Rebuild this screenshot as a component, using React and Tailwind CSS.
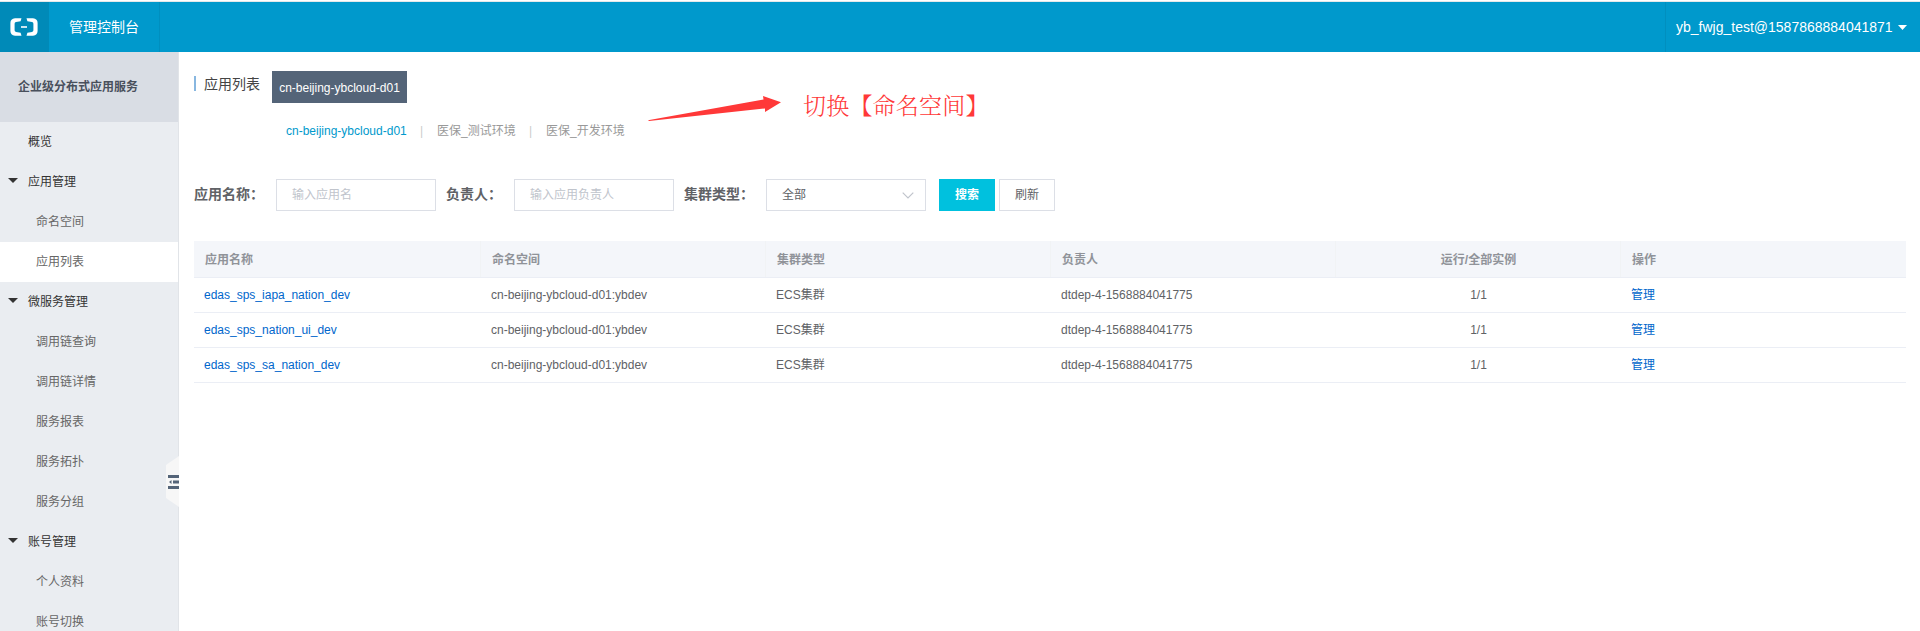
import React from "react";

const menu = [
  { label: "概览", kind: "top" },
  { label: "应用管理", kind: "group" },
  { label: "命名空间", kind: "sub" },
  { label: "应用列表", kind: "sub", active: true },
  { label: "微服务管理", kind: "group" },
  { label: "调用链查询", kind: "sub" },
  { label: "调用链详情", kind: "sub" },
  { label: "服务报表", kind: "sub" },
  { label: "服务拓扑", kind: "sub" },
  { label: "服务分组", kind: "sub" },
  { label: "账号管理", kind: "group" },
  { label: "个人资料", kind: "sub" },
  { label: "账号切换", kind: "sub" },
];

const columns = ["应用名称", "命名空间", "集群类型", "负责人", "运行/全部实例", "操作"];
const apps = ["edas_sps_iapa_nation_dev", "edas_sps_nation_ui_dev", "edas_sps_sa_nation_dev"];

function Logo() {
  return (
    <svg width="28" height="18" viewBox="0 0 28 18" fill="#fff">
      <path d="M11.5 .3H5Q.4 .8 .4 5V13Q.4 17.2 5 17.7H11.5L10.6 14.8L6 13.9Q4.6 13.5 4.6 12.3V5.7Q4.6 4.5 6 4.1L10.6 3.2Z" />
      <path d="M16.5 .3H23Q27.6 .8 27.6 5V13Q27.6 17.2 23 17.7H16.5L17.4 14.8L22 13.9Q23.4 13.5 23.4 12.3V5.7Q23.4 4.5 22 4.1L17.4 3.2Z" />
      <path d="M11 8.2H17V9.8H11Z" />
    </svg>
  );
}

function Header() {
  return (
    <header className="flex h-[52px] shrink-0 items-stretch border-t border-white bg-[#0099cc] text-sm text-white">
      <div className="flex w-full border-t border-[#e3e8ea]">
        <div className="flex w-[49px] items-center bg-[#008ab8] pl-2.5">
          <Logo />
        </div>
        <div className="flex w-[111px] items-center border-r border-[#008fbf] pl-5">管理控制台</div>
        <div className="ml-auto flex w-[255px] items-center border-l border-[#008fbf] pl-2.5">
          <span>yb_fwjg_test@1587868884041871</span>
          <svg className="ml-[5px]" width="9" height="5" viewBox="0 0 9 5">
            <path d="M0 0H9L4.5 5Z" fill="#fff" />
          </svg>
        </div>
      </div>
    </header>
  );
}

function Sidebar() {
  return (
    <aside className="relative h-full w-[179px] shrink-0 border-r border-[#e1e4e8] bg-[#eaedf1] text-xs">
      <div className="flex h-[70px] items-center bg-[#d9dde4] pl-[18px] font-bold text-[#49505c]">企业级分布式应用服务</div>
      <nav>
        {menu.map((m) => (
          <div
            key={m.label}
            className={
              "flex h-10 items-center " +
              (m.active ? "bg-white " : "") +
              (m.kind === "sub" ? "pl-9 text-[#666666]" : m.kind === "top" ? "pl-7 text-[#333333]" : "pl-2 text-[#333333]")
            }
          >
            {m.kind === "group" && (
              <svg className="mr-2.5 mb-[3px]" width="10" height="5" viewBox="0 0 10 5">
                <path d="M0 0H10L5 5Z" fill="#333" />
              </svg>
            )}
            {m.label}
          </div>
        ))}
      </nav>
      <svg className="absolute top-[404px] -right-px" width="13" height="51" viewBox="0 0 13 51">
        <path d="M13 0L0 9V42L13 51Z" fill="#f7f7f7" />
        <path d="M2 20.5H13M7 26H13M2 31.5H13" stroke="#546478" strokeWidth="2.8" />
        <path d="M5.5 24V28L3 26Z" fill="#546478" />
      </svg>
    </aside>
  );
}

function Title() {
  return (
    <div className="flex h-[52px] pt-[19px]">
      <div className="mt-[5px] h-[15px] w-0.5 bg-[#88b7e0]" />
      <h1 className="mt-px ml-2 h-6 w-[68px] text-sm leading-6 text-[#444444]">应用列表</h1>
      <div className="flex h-8 w-[135px] items-center justify-center bg-[#546478] pt-0.5 text-xs text-white">
        cn-beijing-ybcloud-d01
      </div>
    </div>
  );
}

function Namespaces() {
  return (
    <div className="flex h-[54px] items-center pl-[92px] text-xs text-[#999999]">
      <span className="w-[134px] text-[#0099cc]">cn-beijing-ybcloud-d01</span>
      <span className="w-[17px] text-[#cccccc]">|</span>
      <span className="w-[92px]">医保_测试环境</span>
      <span className="w-[17px] text-[#cccccc]">|</span>
      <span>医保_开发环境</span>
    </div>
  );
}

function Filters() {
  const label = "pb-0.5 text-sm font-bold text-[#606266]";
  const box = "flex h-8 w-40 items-center border border-[#dcdfe6] px-[15px]";
  return (
    <div className="mt-[21px] flex h-8 items-center text-xs">
      <span className={label + " w-[82px]"}>应用名称：</span>
      <div className={box + " text-[#c0c4cc]"}>输入应用名</div>
      <span className={label + " ml-2.5 w-[68px]"}>负责人：</span>
      <div className={box + " text-[#c0c4cc]"}>输入应用负责人</div>
      <span className={label + " ml-2.5 w-[82px]"}>集群类型：</span>
      <div className={box + " justify-between pr-[11px] text-[#606266]"}>
        全部
        <svg width="12" height="7" viewBox="0 0 12 7" fill="none" stroke="#c0c4cc" strokeWidth="1.2">
          <path d="M.7 .7L6 6L11.3 .7" />
        </svg>
      </div>
      <button className="ml-[13px] h-8 w-14 bg-[#00c1de] font-bold text-white">搜索</button>
      <button className="ml-1 h-8 w-14 border border-[#dcdfe6] text-[#606266]">刷新</button>
    </div>
  );
}

function Table() {
  const grid = "grid grid-cols-[287px_285px_285px_285px_285px_285px] items-center border-b border-[#ebeef5]";
  return (
    <div className="mt-[30px] w-[1712px] text-xs text-[#606266]">
      <div className={grid + " h-[37px] bg-[#f4f6fa] font-bold text-[#909399]"}>
        {columns.map((c, i) => (
          <div
            key={c}
            className={
              "flex h-full items-center pt-0.5 pr-2.5 pl-[11px] " +
              (i === 4 ? "justify-center " : "") +
              (i < 5 ? "border-r border-[#f1f3f5]" : "")
            }
          >
            {c}
          </div>
        ))}
      </div>
      {apps.map((a) => (
        <div key={a} className={grid + " h-[35px]"}>
          <div className="px-2.5 text-[#0066cc]">{a}</div>
          <div className="px-2.5">cn-beijing-ybcloud-d01:ybdev</div>
          <div className="px-2.5">ECS集群</div>
          <div className="px-2.5">dtdep-4-1568884041775</div>
          <div className="px-2.5 text-center">1/1</div>
          <div className="px-2.5 text-[#0066cc]">管理</div>
        </div>
      ))}
    </div>
  );
}

function Annotation() {
  return (
    <div className="absolute top-[92px] left-[648px] flex text-[#ff3838]">
      <svg width="134" height="32" viewBox="0 0 134 32">
        <path d="M0 28.3L115.5 7.5L115 4L133 10.3L117 20V16.5L1 29Z" fill="#ff3838" />
      </svg>
      <span className="mt-0.5 ml-[21px] font-['Liberation_Serif','Noto_Serif_CJK_SC','Noto_Sans_CJK_SC',serif] text-[23px] leading-[26px] font-light tracking-[0.2px]">
        切换【命名空间】
      </span>
    </div>
  );
}

export default function App() {
  return (
    <div className="relative flex h-[631px] w-[1920px] flex-col overflow-hidden bg-white font-['Liberation_Sans','Noto_Sans_CJK_SC',sans-serif]">
      <Header />
      <div className="flex min-h-0 flex-1">
        <Sidebar />
        <main className="flex-1 pl-[15px]">
          <Title />
          <Namespaces />
          <Filters />
          <Table />
        </main>
      </div>
      <Annotation />
    </div>
  );
}
